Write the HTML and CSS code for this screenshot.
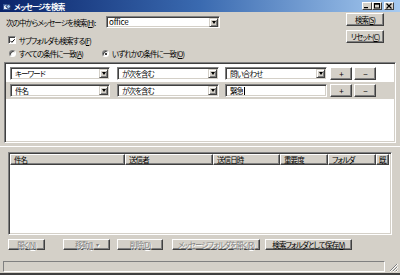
FILE: index.html
```html
<!DOCTYPE html>
<html lang="ja">
<head>
<meta charset="utf-8">
<title>メッセージを検索</title>
<link rel="stylesheet" href="styles.css">
</head>
<body>
<div class="window">
  <div class="titlebar">
    <svg class="ticon" viewBox="0 0 9 9" width="9" height="9">
      <rect x="0.5" y="2.5" width="6" height="5" fill="#e8eef8" stroke="#3a5a9a" stroke-width="1"/>
      <path d="M0.5 2.5 L3.5 5 L6.5 2.5" fill="none" stroke="#3a5a9a" stroke-width="0.8"/>
      <circle cx="5.5" cy="4.5" r="2" fill="#9cc4ee" stroke="#203060" stroke-width="0.9"/>
      <path d="M7 6 L8.6 7.8" stroke="#203060" stroke-width="1.3"/>
    </svg>
    <span class="ttext">メッセージを検索</span>
    <div class="tbtns">
      <span class="tb"><svg viewBox="0 0 8 6" width="8" height="6"><rect x="1" y="4" width="4" height="1.2" fill="#000"/></svg></span>
      <span class="tb"><svg viewBox="0 0 8 6" width="8" height="6"><rect x="1.5" y="0.5" width="5" height="4.5" fill="none" stroke="#000" stroke-width="1"/><rect x="1.5" y="0.5" width="5" height="1.2" fill="#000"/></svg></span>
      <span class="tb close"><svg viewBox="0 0 8 6" width="8" height="6"><path d="M1.5 0.5 L6.5 5.5 M6.5 0.5 L1.5 5.5" stroke="#000" stroke-width="1.2"/></svg></span>
    </div>
  </div>

  <div class="top">
    <div class="left">
      <div class="row1">
        <span class="lbl">次の中からメッセージを検索(<u>H</u>):</span>
        <div class="combo office"><span class="val">office</span><span class="arrow"><i class="tri"></i></span></div>
      </div>
      <div class="check">
        <span class="cbox"><svg viewBox="0 0 6 6" width="6" height="6"><path d="M0.5 2.8 L2.3 4.6 L5.6 1" fill="none" stroke="#000" stroke-width="1.2"/></svg></span>
        <span>サブフォルダも検索する(<u>F</u>)</span>
      </div>
      <div class="radios">
        <span class="radio first"><span class="rbtn"></span><span>すべての条件に一致(<u>A</u>)</span></span>
        <span class="radio"><span class="rbtn on"></span><span>いずれかの条件に一致(<u>O</u>)</span></span>
      </div>
    </div>
    <div class="right">
      <button class="btn side">検索(<u>S</u>)</button>
      <button class="btn side">リセット(<u>C</u>)</button>
    </div>
  </div>

  <div class="criteria">
    <div class="crow">
      <div class="combo c1"><span class="val">キーワード</span><span class="arrow"><i class="tri"></i></span></div>
      <div class="combo c2"><span class="val">が次を含む</span><span class="arrow"><i class="tri"></i></span></div>
      <div class="combo c3"><span class="val">問い合わせ</span><span class="arrow"><i class="tri"></i></span></div>
      <button class="btn pm plus">+</button>
      <button class="btn pm minus">−</button>
    </div>
    <div class="crow sel">
      <div class="combo c1"><span class="val">件名</span><span class="arrow"><i class="tri"></i></span></div>
      <div class="combo c2"><span class="val">が次を含む</span><span class="arrow"><i class="tri"></i></span></div>
      <div class="field c3"><span class="val">緊急</span><span class="caret"></span></div>
      <button class="btn pm plus">+</button>
      <button class="btn pm minus">−</button>
    </div>
  </div>

  <div class="split"></div>

  <div class="results">
    <div class="header">
      <span class="hc h1">件名</span>
      <span class="hc h2">送信者</span>
      <span class="hc h3">送信日時</span>
      <span class="hc h4">重要度</span>
      <span class="hc h5">フォルダ</span>
      <span class="hc h6">既</span>
    </div>
  </div>

  <div class="actions">
    <button class="btn act a1 dis">開く(<u>N</u>)</button>
    <button class="btn act a2 dis">移動(<u>I</u>) <span class="smalltri">▾</span></button>
    <button class="btn act a3 dis">削除(<u>D</u>)</button>
    <button class="btn act a4 dis">メッセージフォルダを開く(<u>R</u>)</button>
    <button class="btn act a5">検索フォルダとして保存(<u>V</u>)</button>
  </div>

  <div class="status">
    <div class="sfield"></div>
    <svg class="grip" viewBox="0 0 10 10" width="10" height="10">
      <path d="M9 2 L2 9 M9 5 L5 9 M9 8 L8 9" stroke="#808080" stroke-width="1"/>
      <path d="M10 2 L2 10 M10 5 L5 10 M10 8 L8 10" stroke="#ffffff" stroke-width="1"/>
    </svg>
  </div>
</div>
</body>
</html>
```

FILE: styles.css
```css
* { box-sizing: border-box; }
html, body { margin: 0; padding: 0; }
body {
  width: 400px;
  height: 275px;
  overflow: hidden;
  background: #d4d0c8;
  font-family: "Noto Sans CJK JP", "Noto Sans", sans-serif;
  font-size: 7.5px;
  font-feature-settings: "palt";
  letter-spacing: -0.9px;
  line-height: 1.2;
  color: #000;
  white-space: nowrap;
}
u { text-decoration: underline; text-underline-offset: 1px; }

.window {
  width: 400px;
  height: 275px;
  display: flex;
  flex-direction: column;
  border-bottom: 2px solid #404040;
}

/* title bar */
.titlebar {
  flex: none;
  height: 12px;
  display: flex;
  align-items: center;
  padding-left: 3px;
  background: linear-gradient(to right, #0a246a 0%, #3a6ab0 50%, #a6caf0 100%);
  color: #fff;
  font-weight: bold;
  font-size: 7.5px;
  letter-spacing: -0.8px;
}
.ticon { flex: none; margin-right: 2px; }
.ttext { flex: 1; }
.tbtns { display: flex; margin-right: 6px; }
.tb {
  width: 10px;
  height: 8px;
  background: #d4d0c8;
  border: 1px solid;
  border-color: #fff #404040 #404040 #fff;
  display: flex;
  align-items: center;
  justify-content: center;
}
.tb svg { display: block; }
.tb.close { margin-left: 2px; }

/* generic controls */
.btn {
  font: inherit;
  letter-spacing: inherit;
  color: #000;
  margin: 0;
  padding: 0;
  background: #d4d0c8;
  border: 1px solid;
  border-color: #fff #404040 #404040 #fff;
  box-shadow: inset -1px -1px #808080;
  display: flex;
  align-items: center;
  justify-content: center;
  white-space: nowrap;
  overflow: visible;
}
.btn.dis {
  color: #808080;
  text-shadow: 1px 1px 0 #fff;
}
.combo, .field {
  height: 13px;
  background: #fff;
  border: 1px solid;
  border-color: #808080 #fff #fff #808080;
  box-shadow: inset 1px 1px #404040, inset -1px -1px #d4d0c8;
  display: flex;
  align-items: center;
  padding: 1px 1px 1px 4px;
}
.combo .val, .field .val { flex: 1; white-space: nowrap; overflow: hidden; line-height: 10px; }
.field .val { flex: none; }
.combo .arrow {
  flex: none;
  width: 9px;
  height: 9px;
  background: #d4d0c8;
  border: 1px solid;
  border-color: #d4d0c8 #404040 #404040 #d4d0c8;
  box-shadow: inset 1px 1px #fff, inset -1px -1px #808080;
  display: flex;
  align-items: center;
  justify-content: center;
}
.tri {
  display: block;
  width: 0;
  height: 0;
  border-left: 2.5px solid transparent;
  border-right: 2.5px solid transparent;
  border-top: 3px solid #000;
}
.caret { width: 1px; height: 8px; background: #000; margin-left: 1px; }

/* top area */
.top {
  flex: none;
  height: 50px;
  display: flex;
  padding-left: 6px;
}
.left { width: 340px; }
.right {
  width: 38px;
  display: flex;
  flex-direction: column;
  gap: 4px;
  padding-top: 1px;
}
.btn.side { height: 13px; width: 38px; }

.row1 { display: flex; align-items: center; height: 12px; margin-top: 4px; }
.lbl { width: 100px; flex: none; }
.combo.office { width: 114px; height: 12px; padding-left: 2px; }
.combo.office .val { font-size: 8px; letter-spacing: -0.2px; }

.check { display: flex; align-items: center; height: 10px; margin-top: 7px; padding-left: 2px; gap: 3px; }
.cbox {
  width: 8px;
  height: 8px;
  background: #fff;
  border: 1px solid;
  border-color: #808080 #fff #fff #808080;
  box-shadow: inset 1px 1px #404040;
  display: flex;
  align-items: center;
  justify-content: center;
  padding: 1px 0 0 1px;
}
.cbox svg { display: block; }

.radios { display: flex; align-items: center; height: 10px; margin-top: 3px; padding-left: 3px; }
.radio { display: flex; align-items: center; gap: 3px; }
.radio.first { width: 93px; }
.rbtn {
  width: 7px;
  height: 7px;
  border-radius: 50%;
  background: #fff;
  border: 1px solid;
  border-color: #808080 #fff #fff #808080;
  box-shadow: inset 1px 1px #404040;
  display: flex;
  align-items: center;
  justify-content: center;
}
.rbtn.on::after {
  content: "";
  width: 2px;
  height: 2px;
  border-radius: 50%;
  background: #000;
  margin: 1px 0 0 1px;
}

/* criteria */
.criteria {
  flex: none;
  height: 81px;
  margin: 0 4px;
  background: #fff;
  border: 1px solid;
  border-color: #808080 #fff #fff #808080;
  box-shadow: inset 1px 1px #404040, inset -1px -1px #d4d0c8;
  padding: 2px 1px 1px 1px;
}
.crow {
  display: flex;
  align-items: center;
  height: 17px;
  padding-left: 4px;
}
.crow.sel { background: #d4d0c8; }
.c1 { width: 100px; }
.c2 { width: 102px; margin-left: 7px; }
.c3 { width: 102px; margin-left: 6px; }
.btn.pm { width: 22px; height: 13px; font-size: 8px; }
.btn.plus { margin-left: 3px; }
.btn.minus { margin-left: 2px; }

/* splitter */
.split {
  flex: none;
  height: 9px;
  border-top: 3px solid #d4d0c8;
  border-bottom: 4px solid #d4d0c8;
  background: linear-gradient(#fff 0 1px, #d4d0c8 1px 2px);
}

/* results */
.results {
  flex: none;
  height: 83px;
  margin: 0 8px;
  background: #fff;
  border: 1px solid;
  border-color: #808080 #fff #fff #808080;
  box-shadow: inset 1px 1px #404040, inset -1px -1px #d4d0c8;
  padding: 1px;
}
.header { display: flex; height: 11px; }
.hc {
  flex: none;
  height: 11px;
  background: #d4d0c8;
  border: 1px solid;
  border-color: #fff #404040 #404040 #fff;
  box-shadow: inset -1px -1px #808080;
  padding-left: 3px;
  display: flex;
  align-items: center;
  white-space: nowrap;
  overflow: hidden;
  line-height: 9px;
}
.h1 { width: 115px; }
.h2 { width: 88px; }
.h3 { width: 67px; }
.h4 { width: 48px; }
.h5 { width: 48px; }
.h6 { width: 13px; padding-left: 2px; }

/* actions */
.actions {
  flex: none;
  height: 11px;
  margin-top: 4px;
  display: flex;
  padding-left: 8px;
}
.btn.act { height: 11px; line-height: 9px; }
.a1 { width: 37px; }
.a2 { width: 47px; margin-left: 18px; }
.a3 { width: 46px; margin-left: 7px; }
.a4 { width: 88px; margin-left: 9px; }
.a5 { width: 87px; margin-left: 5px; }
.smalltri { font-size: 6px; margin-left: 3px; }

/* status */
.status {
  flex: none;
  height: 11px;
  margin-top: 11px;
  display: flex;
  align-items: flex-end;
  padding-left: 3px;
}
.sfield {
  width: 382px;
  height: 11px;
  border: 1px solid;
  border-color: #808080 #fff #fff #808080;
}
.grip { margin-left: 3px; display: block; }
```
